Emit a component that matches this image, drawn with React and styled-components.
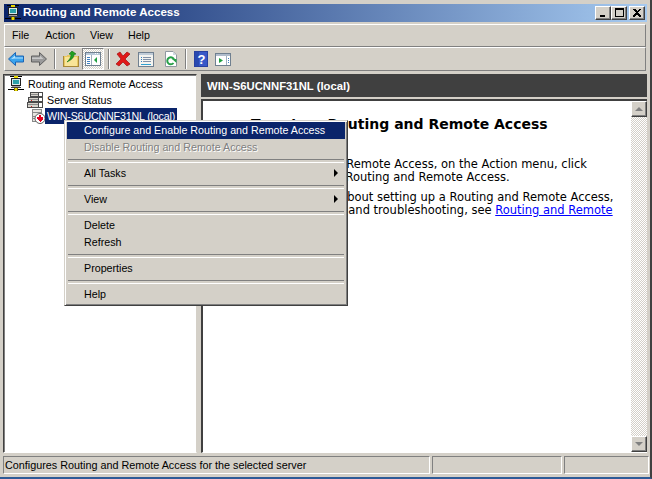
import React from "react";
import styled, { createGlobalStyle, css } from "styled-components";

const Global = createGlobalStyle`
  html, body { margin: 0; padding: 0; background: #d4d0c8; }
  body { font-family: "Liberation Sans", Arial, sans-serif; font-size: 10.7px; color: #000; }
  * { box-sizing: border-box; }
`;

const Win = styled.div`
  position: relative;
  width: 652px;
  height: 479px;
  overflow: hidden;
  background: #d4d0c8;
  display: flex;
  flex-direction: column;
  padding: 4px 3px 0 4px;
  border-right: 2px solid #404040;
  border-bottom: 2px solid #2d5a96;
`;

const TitleBar = styled.div`
  height: 18px;
  flex: none;
  display: flex;
  align-items: center;
  background: linear-gradient(90deg, #0a246a 0%, #a6caf0 100%);
  padding: 0 2px 0 1px;
`;
const TitleText = styled.span`
  font: bold 11.6px/14px "Liberation Sans", Arial, sans-serif;
  color: #fff;
  margin-left: 2px;
  padding-bottom: 3px;
  flex: 1;
  white-space: nowrap;
`;
const CapBtn = styled.div`
  width: 16px;
  height: 14px;
  margin-left: ${(p) => p.$gap || 0}px;
  background: #d4d0c8;
  border: 1px solid;
  border-color: #fff #404040 #404040 #fff;
  box-shadow: inset -1px -1px 0 #808080;
  display: flex;
  align-items: center;
  justify-content: center;
`;

const Band = styled.div`
  flex: none;
  height: ${(p) => p.$h}px;
  margin-top: ${(p) => p.$mt || 0}px;
  margin-right: 1px;
  display: flex;
  align-items: center;
  border: 1px solid;
  border-color: #fff #808080 #808080 #fff;
`;
const MenuLabel = styled.span`
  font-size: 10.7px;
  margin-left: ${(p) => p.$ml}px;
  padding-bottom: 1px;
  white-space: nowrap;
`;
const Tool = styled.div`
  flex: none;
  width: ${(p) => p.$w || 16}px;
  margin-left: ${(p) => p.$ml || 0}px;
  height: 16px;
  display: flex;
  align-items: center;
  justify-content: center;
`;
const PressedTool = styled.div`
  flex: none;
  width: 22px;
  height: 22px;
  margin-left: ${(p) => p.$ml || 0}px;
  border: 1px solid;
  border-color: #808080 #fff #fff #808080;
  background: repeating-conic-gradient(#d4d0c8 0 25%, #fff 0 50%) 0 0 / 2px 2px;
  display: flex;
  align-items: center;
  justify-content: center;
`;
const Sep = styled.div`
  flex: none;
  width: 2px;
  height: 20px;
  margin-left: ${(p) => p.$ml}px;
  border-left: 1px solid #808080;
  border-right: 1px solid #fff;
`;

const Panes = styled.div`
  flex: none;
  height: 379px;
  margin-top: 3px;
  margin-left: -1px;
  display: flex;
`;
const TreePane = styled.div`
  width: 194px;
  flex: none;
  background: #fff;
  border: 1px solid;
  border-color: #404040 #d4d0c8 #fff #404040;
  box-shadow: inset 1px 1px 0 #808080;
  padding: 1px 0 0 4px;
  display: flex;
  flex-direction: column;
`;
const TreeRow = styled.div`
  height: 16px;
  display: flex;
  align-items: center;
  margin-left: ${(p) => p.$ind || 0}px;
`;
const TreeLabel = styled.span`
  margin-left: ${(p) => p.$ml ?? 3}px;
  padding: 0 2px;
  height: 16px;
  line-height: 16px;
  white-space: nowrap;
  ${(p) => p.$sel && css`background: #0a246a; color: #fff; letter-spacing: -0.17px;`}
`;
const RightCol = styled.div`
  flex: 1;
  margin-left: 4px;
  margin-right: 0;
  display: flex;
  flex-direction: column;
  min-width: 0;
`;
const Header = styled.div`
  height: 23px;
  flex: none;
  background: #404040;
  color: #fff;
  font: bold 11.3px "Liberation Sans", Arial, sans-serif;
  display: flex;
  align-items: center;
  padding-left: 6px;
`;
const ContentFrame = styled.div`
  flex: 1;
  margin-top: 2px;
  display: flex;
  border-top: 2px solid #404040;
  border-left: 2px solid #404040;
  border-bottom: 1px solid #fff;
  background: #fff;
  min-height: 0;
`;
const Content = styled.div`
  flex: 1;
  padding: 14px 0 0 12px;
  font: 11.5px/13px "DejaVu Sans", Verdana, sans-serif;
  white-space: nowrap;
`;
const H1 = styled.div`
  font: bold 14px/18px "DejaVu Sans", Verdana, sans-serif;
  margin-bottom: 25px;
  padding-left: 36px;
`;
const Para = styled.div`
  margin-bottom: 7px;
  padding-left: ${(p) => p.$ind || 0}px;
`;
const Link = styled.a`
  color: #0000ff;
  text-decoration: underline;
`;
const Scroll = styled.div`
  width: 16px;
  flex: none;
  display: flex;
  flex-direction: column;
  background: repeating-conic-gradient(#d4d0c8 0 25%, #fff 0 50%) 0 0 / 2px 2px;
`;
const ScrollBtn = styled.div`
  width: 16px;
  height: 16px;
  flex: none;
  margin-top: ${(p) => (p.$end ? "auto" : 0)};
  background: #d4d0c8;
  border: 1px solid;
  border-color: #fff #404040 #404040 #fff;
  box-shadow: inset -1px -1px 0 #808080;
  display: flex;
  align-items: center;
  justify-content: center;
`;

const StatusBar = styled.div`
  flex: none;
  height: 18px;
  margin-top: 3px;
  margin-left: -1px;
  display: flex;
  gap: 2px;
`;
const StatusCell = styled.div`
  width: ${(p) => p.$w}px;
  flex: none;
  border: 1px solid;
  border-color: #808080 #fff #fff #808080;
  padding-left: 1px;
  line-height: 16px;
  font-size: 10.8px;
  white-space: nowrap;
  overflow: hidden;
`;

const Menu = styled.div`
  position: absolute;
  left: 64px;
  top: 120px;
  width: 284px;
  height: 186px;
  background: #d4d0c8;
  border: 1px solid;
  border-color: #d4d0c8 #404040 #404040 #d4d0c8;
  box-shadow: inset 1px 1px 0 #fff, inset -1px -1px 0 #808080;
  padding: 1px 2px;
  display: flex;
  flex-direction: column;
`;
const Item = styled.div`
  height: 17px;
  flex: none;
  padding: 0 7px 1px 17px;
  display: flex;
  align-items: center;
  justify-content: space-between;
  font-size: 10.7px;
  white-space: nowrap;
  ${(p) => p.$active && css`background: #0a246a; color: #fff;`}
  ${(p) => p.$disabled && css`color: #808080; text-shadow: 1px 1px 0 #fff;`}
`;
const MenuSep = styled.div`
  height: 9px;
  flex: none;
  display: flex;
  align-items: center;
  padding: 0 1px;
  &::before {
    content: "";
    flex: 1;
    height: 2px;
    border-top: 1px solid #808080;
    border-bottom: 1px solid #fff;
  }
`;
const Arrow = styled.span`
  width: 0;
  height: 0;
  border-left: 4px solid #000;
  border-top: 4px solid transparent;
  border-bottom: 4px solid transparent;
`;

const Px = ({ w = 16, h = 16, children }) => (
  <svg width={w} height={h} viewBox={`0 0 ${w} ${h}`} shapeRendering="crispEdges" style={{ display: "block", flex: "none" }}>
    {children}
  </svg>
);

const NetIcon = () => (
  <Px>
    <path d="M0 13h16v1H0z" fill="#000" />
    <path d="M2 0h12v1H2z" fill="#000" />
    <path d="M6 0h4v2H6z" fill="#e8d800" />
    <path d="M3 2h10v8H3z" fill="#202020" />
    <path d="M4 3h8v6H4z" fill="#d8e8e8" />
    <path d="M5 4h6v4H5z" fill="#2aa0a8" />
    <path d="M4 10h8v2H4z" fill="#a0a0a0" />
    <path d="M3 11h10v1H3z" fill="#404040" />
    <path d="M6 12h4v3H6z" fill="#e8d800" />
    <path d="M6 12h1v3H6zM9 12h1v3H9z" fill="#807000" />
  </Px>
);
const ServersIcon = () => (
  <Px>
    <path d="M3 0h13v5H3zM1 5h15v5H1zM0 10h16v6H0z" fill="#4a4a4a" />
    <path d="M4 1h11v3H4zM2 6h13v3H2zM1 11h14v4H1z" fill="#d8d4cc" />
    <path d="M4 2h11v1H4zM2 7h13v1H2zM1 12h14v1H1z" fill="#8a8a8a" />
    <path d="M4 8h1v1H4zM4 14h1v1H4z" fill="#d02020" />
    <path d="M12 1h3v3h-3zM12 6h3v3h-3zM12 11h3v4h-3z" fill="#fff" />
    <path d="M11 0h1v16h-1z" fill="#4a4a4a" />
  </Px>
);
const ServerDownIcon = () => (
  <Px>
    <path d="M2 1h10v8H2zM2 9h4v5H2z" fill="#8a8a8a" />
    <path d="M3 2h8v6H3zM3 9h2v4H3z" fill="#e8e6e0" />
    <path d="M3 4h8v1H3zM3 10h2v1H3z" fill="#8a8a8a" />
    <circle cx="10" cy="10.500" r="5" fill="#fff" stroke="#606060" strokeWidth="1" shapeRendering="auto" />
    <path d="M9 7h2v2h2v2l-3 3-3-3V9h2z" fill="#e00020" />
  </Px>
);
const BackIcon = () => (
  <Px>
    <path d="M.5 8 7.500 1.500v3.500h8v6h-8v3.500z" fill="#3aa4ee" stroke="#1c64b4" strokeWidth="1" shapeRendering="auto" />
    <path d="M3 8 7 4.600V6.500h8v1H7z" fill="#b4e2ff" shapeRendering="auto" />
  </Px>
);
const ForwardIcon = () => (
  <Px>
    <path d="M15.500 8 8.500 1.500v3.500h-8v6h8v3.500z" fill="#9a9a9a" stroke="#606060" strokeWidth="1" shapeRendering="auto" />
    <path d="M1 6.500h8V4.600L12.500 8H1z" fill="#c8c8c8" shapeRendering="auto" />
  </Px>
);
const FolderUpIcon = () => (
  <Px>
    <path d="M1 5h3V4h3v1h8v11H1z" fill="#e8c860" />
    <path d="M2 6h12v9H2z" fill="#f8e498" />
    <path d="M0 5h1v11H0zM1 15h14v1H1zM15 5h1v11h-1z" fill="#a88838" />
    <path d="M9 0 13 3 11 3.500C11 7 8 9 4 11 6 9 8 7 8 3.500L6 3z" fill="#20a020" stroke="#107010" strokeWidth=".6" shapeRendering="auto" />
  </Px>
);
const ConsoleIcon = () => (
  <Px w={18} h={16}>
    <path d="M1 1h16v14H1z" fill="#fff" />
    <path d="M1 1h16v1H1zM1 14h16v1H1zM1 1h1v14H1zM16 1h1v14h-1z" fill="#708090" />
    <path d="M2 2h14v2H2z" fill="#b8c8d8" />
    <path d="M13 2h1v1h-1zM11 2h1v1h-1z" fill="#fff" />
    <path d="M3 6h3v1H3zM3 8h3v1H3zM3 10h3v1H3zM3 12h3v1H3z" fill="#4080c0" />
    <path d="M7 4h1v10H7z" fill="#a0b0c0" />
    <path d="M13 6v6l-3-3z" fill="#20a040" shapeRendering="auto" />
  </Px>
);
const DeleteIcon = () => (
  <Px>
    <path d="M2 3 5 1 8 5 12 1 15 3 10 8 15 13 12 15 8 11 4 15 1 13 6 8z" fill="#e01818" stroke="#a01010" strokeWidth=".7" shapeRendering="auto" />
  </Px>
);
const PropsIcon = () => (
  <Px>
    <path d="M0 1h16v15H0z" fill="#708090" />
    <path d="M1 2h14v13H1z" fill="#f4f4f0" />
    <path d="M1 2h14v2H1z" fill="#c0ccd8" />
    <path d="M3 6h1v1H3zM3 8h1v1H3zM3 10h1v1H3z" fill="#3080c0" />
    <path d="M5 6h8v1H5zM5 8h8v1H5zM5 10h8v1H5z" fill="#8090a8" />
    <path d="M3 13h10v1H3z" fill="#30a0d0" />
  </Px>
);
const RefreshIcon = () => (
  <Px>
    <path d="M2.500 .5h7.500l3.500 3.500v11.500h-11z" fill="#fff" stroke="#9098a0" strokeWidth="1" shapeRendering="auto" />
    <path d="M10 1v3h3z" fill="#d0d8e0" />
    <path d="M11 8.500A3.500 3.500 0 1 0 10.500 12" fill="none" stroke="#28a048" strokeWidth="2" shapeRendering="auto" />
    <path d="M9 8h4.500v4z" fill="#28a048" shapeRendering="auto" />
  </Px>
);
const HelpIcon = () => (
  <Px w={14} h={16}>
    <path d="M0 0h14v16H0z" fill="#2840a0" />
    <path d="M1 1h12v14H1z" fill="#3858c8" />
    <path d="M1 1h4v14H1z" fill="#2848b0" />
    <text x="3.400" y="13" fontFamily="Liberation Sans, sans-serif" fontWeight="bold" fontSize="13" fill="#fff">?</text>
  </Px>
);
const WindowIcon = () => (
  <Px>
    <path d="M0 2h16v13H0z" fill="#708090" />
    <path d="M1 3h14v11H1z" fill="#fff" />
    <path d="M1 3h14v2H1z" fill="#b0bccc" />
    <path d="M11 5h1v9h-1z" fill="#a0b0c0" />
    <path d="M13 7h1v1h-1zM13 9h1v1h-1zM13 11h1v1h-1z" fill="#4080c0" />
    <path d="M4 7v5l4-2.500z" fill="#20a040" shapeRendering="auto" />
  </Px>
);

const menuEntries = [
  { t: "Configure and Enable Routing and Remote Access", active: true },
  { t: "Disable Routing and Remote Access", disabled: true },
  { sep: true },
  { t: "All Tasks", sub: true },
  { sep: true },
  { t: "View", sub: true },
  { sep: true },
  { t: "Delete" },
  { t: "Refresh" },
  { sep: true },
  { t: "Properties" },
  { sep: true },
  { t: "Help" },
];

export default function App() {
  return (
    <>
      <Global />
      <Win>
        <TitleBar>
          <NetIcon />
          <TitleText>Routing and Remote Access</TitleText>
          <CapBtn>
            <Px w={10} h={10}><path d="M2 7h5v2H2z" fill="#000" /></Px>
          </CapBtn>
          <CapBtn>
            <Px w={10} h={10}><path d="M1 0h9v9H1zM2 2v6h7V2z" fill="#000" fillRule="evenodd" /></Px>
          </CapBtn>
          <CapBtn $gap={2}>
            <Px w={10} h={10}><path d="M1 1h2l2 2 2-2h2v1L6 4.500 9 8v1H7L5 6 3 9H1V8l3-3.500L1 2z" fill="#000" /></Px>
          </CapBtn>
        </TitleBar>
        <Band $h={23} $mt={2}>
          <MenuLabel $ml={7}>File</MenuLabel>
          <MenuLabel $ml={16}>Action</MenuLabel>
          <MenuLabel $ml={15}>View</MenuLabel>
          <MenuLabel $ml={15}>Help</MenuLabel>
        </Band>
        <Band $h={24}>
          <Tool $ml={3}><BackIcon /></Tool>
          <Tool $ml={7}><ForwardIcon /></Tool>
          <Sep $ml={7} />
          <Tool $ml={7}><FolderUpIcon /></Tool>
          <PressedTool $ml={3}><ConsoleIcon /></PressedTool>
          <Sep $ml={4} />
          <Tool $ml={5}><DeleteIcon /></Tool>
          <Tool $ml={7}><PropsIcon /></Tool>
          <Tool $ml={9}><RefreshIcon /></Tool>
          <Sep $ml={6} />
          <Tool $ml={6}><HelpIcon /></Tool>
          <Tool $ml={6}><WindowIcon /></Tool>
        </Band>
        <Panes>
          <TreePane>
            <TreeRow><NetIcon /><TreeLabel $ml={2}>Routing and Remote Access</TreeLabel></TreeRow>
            <TreeRow $ind={19}><ServersIcon /><TreeLabel $ml={2}>Server Status</TreeLabel></TreeRow>
            <TreeRow $ind={22}><ServerDownIcon /><TreeLabel $ml={-1} $sel>WIN-S6UCNNF31NL (local)</TreeLabel></TreeRow>
          </TreePane>
          <RightCol>
            <Header>WIN-S6UCNNF31NL (local)</Header>
            <ContentFrame>
              <Content>
                <H1>To set up Routing and Remote Access</H1>
                <Para $ind={3}>
                  To set up Routing and Remote Access, on the Action menu, click<br />
                  Configure and Enable Routing and Remote Access.
                </Para>
                <Para>
                  For more information about setting up a Routing and Remote Access,<br />
                  planning, deployment, and troubleshooting, see <Link>Routing and Remote</Link>
                </Para>
              </Content>
              <Scroll>
                <ScrollBtn>
                  <Px w={8} h={6}><path d="M4 1 8 5H0z" fill="#808080" shapeRendering="auto" /></Px>
                </ScrollBtn>
                <ScrollBtn $end>
                  <Px w={8} h={6}><path d="M4 5 8 1H0z" fill="#808080" shapeRendering="auto" /></Px>
                </ScrollBtn>
              </Scroll>
            </ContentFrame>
          </RightCol>
        </Panes>
        <StatusBar>
          <StatusCell $w={427}>Configures Routing and Remote Access for the selected server</StatusCell>
          <StatusCell $w={130} />
          <StatusCell $w={85} />
        </StatusBar>
        <Menu>
          {menuEntries.map((e, i) =>
            e.sep ? (
              <MenuSep key={i} />
            ) : (
              <Item key={i} $active={e.active} $disabled={e.disabled}>
                {e.t}
                {e.sub && <Arrow />}
              </Item>
            )
          )}
        </Menu>
      </Win>
    </>
  );
}
